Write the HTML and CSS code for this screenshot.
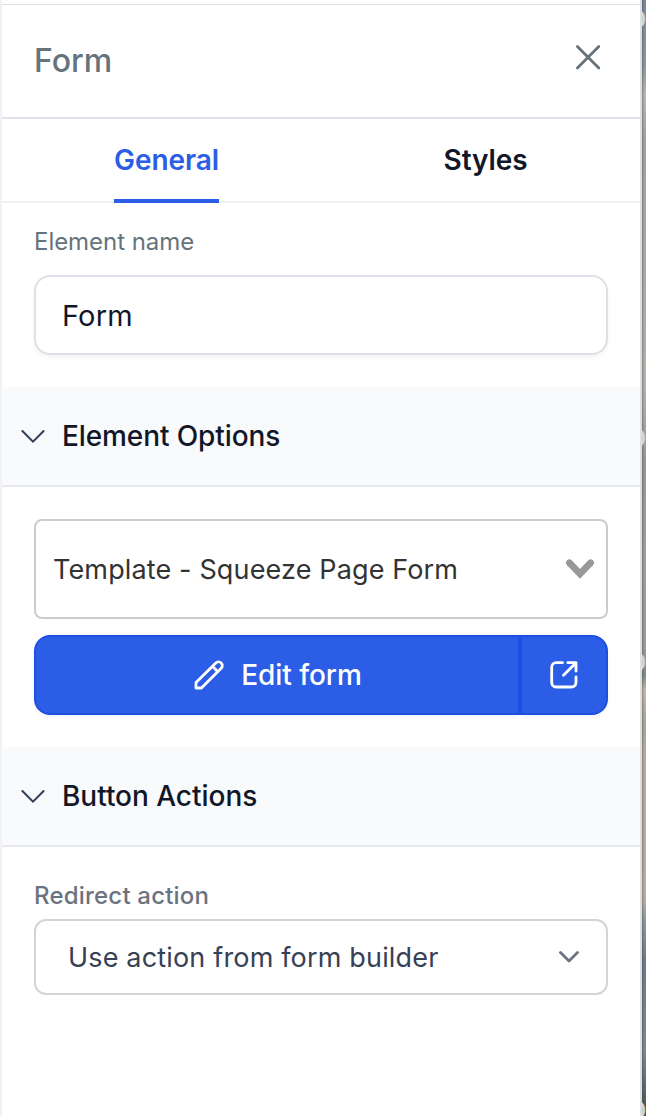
FILE: index.html
```html
<!DOCTYPE html>
<html lang="en">
<head>
<meta charset="utf-8">
<title>Form</title>
<link rel="stylesheet" href="styles.css">
</head>
<body>
<div class="workspace">
  <aside class="panel">
    <header class="panel-header">
      <h1 class="panel-title">Form</h1>
      <svg class="close" width="28" height="28" viewBox="0 0 28 28"><path d="M3.4 3.6 24.8 25M24.8 3.6 3.4 25"/></svg>
    </header>
    <nav class="tabs">
      <div class="tab tab-active"><span class="tab-label">General</span></div>
      <div class="tab"><span class="tab-label">Styles</span></div>
    </nav>
    <section class="name-group">
      <label class="label">Element name</label>
      <div class="input"><span class="input-text">Form</span></div>
    </section>
    <div class="section-head">
      <svg class="caret" width="24" height="14" viewBox="0 0 24 14"><path d="M1.4 2 12 12.6 22.6 2"/></svg>
      <h2 class="section-title">Element Options</h2>
    </div>
    <section class="options">
      <div class="select">
        <span class="select-text">Template - Squeeze Page Form</span>
        <svg class="select-caret" width="28" height="22" viewBox="0 0 28 22"><path d="M3.5 4.8 14 15.8 24.5 4.8"/></svg>
      </div>
      <div class="button-group">
        <div class="btn btn-edit">
          <svg class="pencil" width="30" height="30" viewBox="0 0 30 30"><path d="M2 28V22.6L21.8 2.9a3.8 3.8 0 0 1 5.4 5.4L7.4 28ZM18.4 6.3l5.4 5.4"/></svg>
          <span class="btn-text">Edit form</span>
        </div>
        <div class="btn btn-open">
          <svg class="external" width="28" height="28" viewBox="0 0 28 28"><path d="M12.5 1.7H6.2A4.5 4.5 0 0 0 1.7 6.2V21.5A4.5 4.5 0 0 0 6.2 26H21.5A4.5 4.5 0 0 0 26 21.5V16M17.8 1.7H26V10M26 1.7 13.5 14.2"/></svg>
        </div>
      </div>
    </section>
    <div class="section-head">
      <svg class="caret" width="24" height="14" viewBox="0 0 24 14"><path d="M1.4 2 12 12.6 22.6 2"/></svg>
      <h2 class="section-title title-actions">Button Actions</h2>
    </div>
    <section class="actions">
      <label class="label label-action">Redirect action</label>
      <div class="dropdown">
        <span class="dropdown-text">Use action from form builder</span>
        <svg class="dropdown-caret" width="20" height="12" viewBox="0 0 20 12"><path d="M1.5 1.5 10 10 18.5 1.5"/></svg>
      </div>
    </section>
  </aside>
  <div class="canvas">
    <span class="canvas-text line-1">p</span>
    <span class="canvas-text line-2">p</span>
    <span class="canvas-text line-3">p</span>
    <span class="canvas-text line-4">p</span>
  </div>
</div>
</body>
</html>
```
FILE: styles.css
```css
* { box-sizing: border-box; }
body { margin: 0; background: #fff; font-family: Inter, "Liberation Sans", sans-serif; font-size: 28px; color: #111729; }
svg { display: block; flex: none; fill: none; stroke-linecap: round; }
h1, h2 { margin: 0; }
.workspace { display: flex; width: 646px; height: 1116px; overflow: hidden; }
.panel { width: 642px; padding-top: 4px; border-left: 2px solid #f2f2f4; border-right: 2px solid #dedfe0; background: linear-gradient(#dfe0e3, #dfe0e3) 0 4px / 100% 1px no-repeat #fff; }
.panel-header { display: flex; justify-content: space-between; align-items: flex-start; height: 115px; padding: 36px 38px 0 32px; border-bottom: 2px solid #dee2e8; }
.panel-title { padding-top: 1px; font-size: 32px; line-height: 40px; font-weight: 500; color: #66737b; }
.close { stroke: #66737b; stroke-width: 2.8; margin-top: 3px; }
.tabs { display: flex; height: 84px; border-bottom: 2px solid #f0f1f4; }
.tab { flex: 1; display: flex; justify-content: center; padding-left: 10px; }
.tab-label { height: 84px; line-height: 83px; font-weight: 600; letter-spacing: -.1px; white-space: nowrap; }
.tab-active .tab-label { color: #2b5de6; border-bottom: 4px solid #2b5de6; }
.name-group { height: 184px; padding: 24px 32px 0; }
.label { display: block; font-size: 24px; line-height: 30px; letter-spacing: -.05px; color: #66737b; white-space: nowrap; }
.input { display: flex; align-items: center; height: 80px; margin-top: 18px; padding: 1px 26px 0; border: 2px solid #dfe0e7; border-radius: 16px; box-shadow: 0 2px 4px rgba(16,24,40,.05); font-size: 29px; letter-spacing: .15px; }
.section-head { display: flex; align-items: center; gap: 17px; height: 100px; padding-left: 19px; background: #f8fafc; border-bottom: 2px solid #e7e9ed; }
.caret { stroke: #344054; stroke-width: 2; }
.section-title { font-size: 28px; font-weight: 500; letter-spacing: -.1px; white-space: nowrap; }
.title-actions { letter-spacing: -.03px; }
.options { height: 260px; padding: 32px 32px 0; }
.select { display: flex; align-items: center; justify-content: space-between; height: 100px; padding: 0 12px 0 17px; border: 2px solid #ccc; border-radius: 8px; font-size: 27px; letter-spacing: .14px; color: #333; white-space: nowrap; }
.select-caret { stroke: #999; stroke-width: 6.8; }
.button-group { display: flex; height: 80px; margin-top: 16px; border-radius: 16px; box-shadow: 0 2px 4px rgba(16,24,40,.05); color: #fff; }
.btn { display: flex; align-items: center; justify-content: center; background: #2b5de6; border: 2px solid #1d4fe2; }
.btn-edit { width: 486px; gap: 17px; padding-left: 2px; border-radius: 16px 0 0 16px; font-weight: 500; letter-spacing: -.05px; }
.btn-open { width: 88px; border-radius: 0 16px 16px 0; }
.pencil, .external { stroke: #fff; stroke-width: 2.8; stroke-linejoin: round; }
.actions { padding: 34px 32px 0; }
.label-action { font-weight: 500; letter-spacing: .2px; color: #6b7280; }
.dropdown { display: flex; align-items: center; justify-content: space-between; height: 76px; margin-top: 8px; padding: 0 27px 0 32px; border: 2px solid #d0d5da; border-radius: 12px; font-size: 27px; letter-spacing: .17px; color: #374055; white-space: nowrap; }
.dropdown-text { padding-top: 1px; }
.dropdown-caret { stroke: #6b7280; stroke-width: 2.8; stroke-linejoin: round; }
.canvas { position: relative; flex: 1; overflow: hidden; background: linear-gradient(90deg, rgba(60,65,65,.45), transparent 2px), linear-gradient(#76889b 0, #8a959e 65px, #b5b5b0 95px, #9fa29c 140px, #aaa9a2 260px, #b5b0a8 390px, #929795 460px, #9a9e9c 560px, #969b99 650px, #7e8886 675px, #c4b6a5 690px, #a7a499 725px, #b8ab9b 755px, #b8ad9d 900px, #8c9799 920px, #687b8d 960px, #7a8791 1050px, #4f5f65 1100px, #46535a 1116px); }
.canvas-text { position: absolute; left: -15px; font-size: 32px; line-height: 34px; color: #d4d6d6; }
.line-1 { top: 0; }
.line-2 { top: 419px; }
.line-3 { top: 643px; }
.line-4 { top: 1091px; }
```
